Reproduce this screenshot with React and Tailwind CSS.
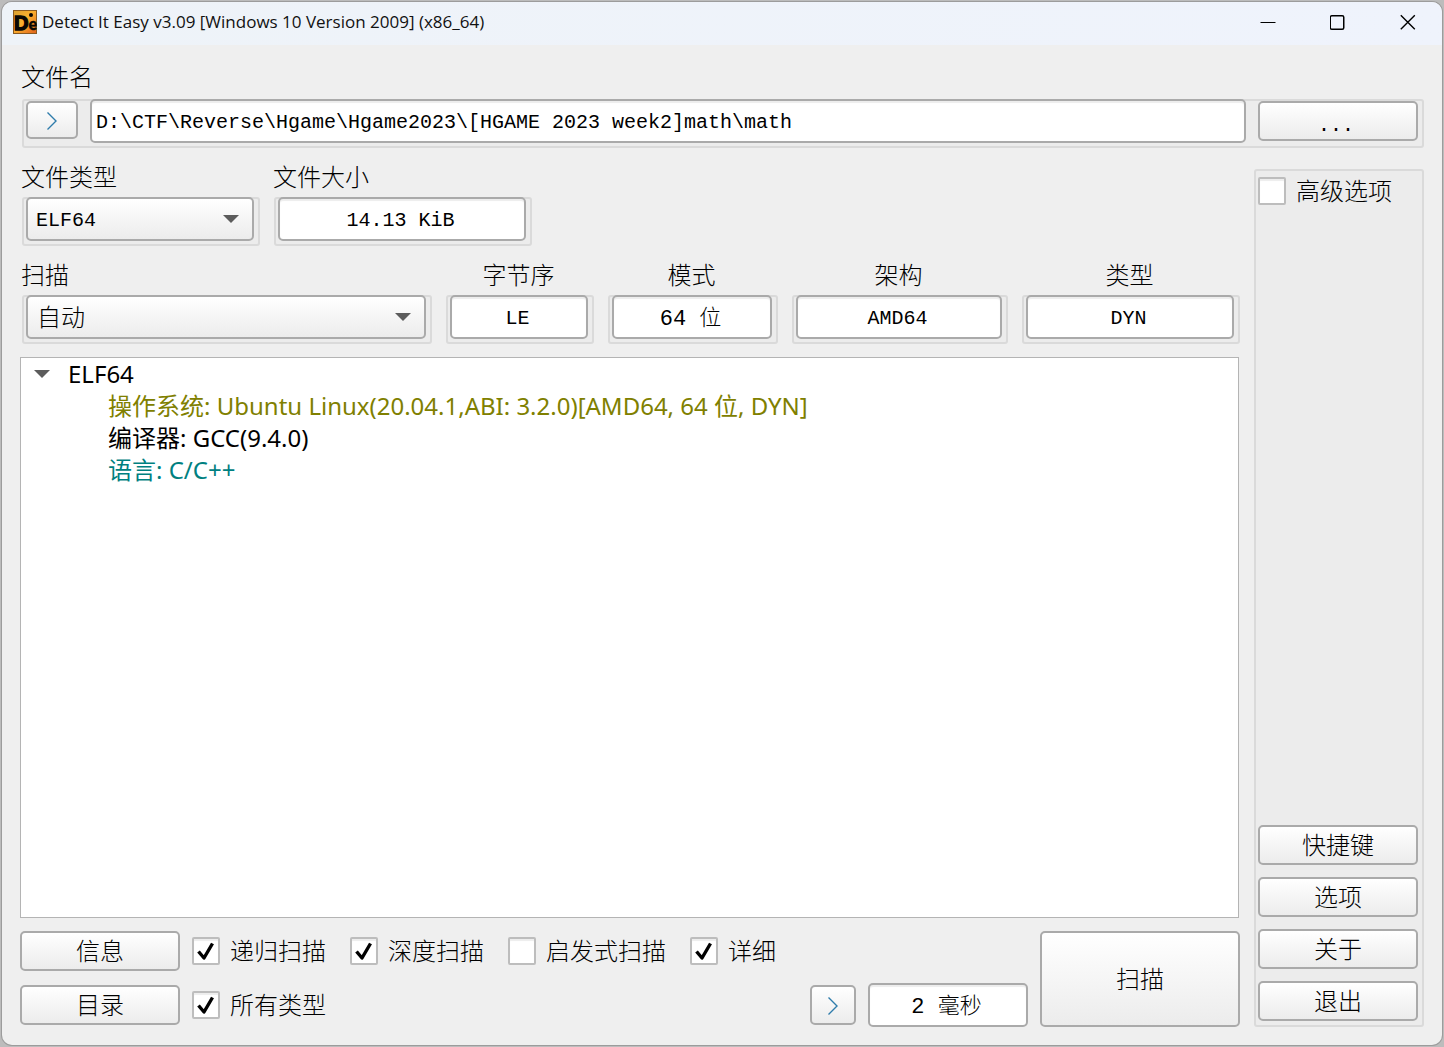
import { useState } from "react";
import clsx from "clsx";

const mono = "font-['Liberation_Mono','Noto_Sans_CJK_SC',monospace]";
const cjk = "font-['Noto_Sans_CJK_SC',sans-serif] font-light";

const SCAN_ENGINES = ["自动", "Detect It Easy", "Nauz File Detector"];

const RESULTS = [
  {
    id: "os",
    text: "操作系统: Ubuntu Linux(20.04.1,ABI: 3.2.0)[AMD64, 64 位, DYN]",
    color: "text-[#808000]",
  },
  { id: "compiler", text: "编译器: GCC(9.4.0)", color: "text-black" },
  { id: "language", text: "语言: C/C++", color: "text-[#008080]" },
];

const AppIcon = () => (
  <svg width="24" height="24" viewBox="0 0 24 24" aria-hidden="true">
    <defs>
      <linearGradient id="logo" x1="0" y1="0" x2="1" y2="1">
        <stop offset="0" stopColor="#d9a030" />
        <stop offset="0.45" stopColor="#fbb02e" />
        <stop offset="1" stopColor="#e2641a" />
      </linearGradient>
    </defs>
    <rect width="24" height="24" fill="#8a5a20" />
    <rect x="1" y="1" width="22" height="22" fill="url(#logo)" />
    <text
      x="1"
      y="19.5"
      fontFamily="'Liberation Sans Narrow', 'Liberation Sans', sans-serif"
      fontWeight="700"
      fontSize="20"
      stroke="#0a0703"
      strokeWidth="1.4"
      fill="#0a0703"
    >
      D<tspan fontFamily="Lato, sans-serif" fontWeight="900" fontSize="16" strokeWidth="0.4">e</tspan>
    </text>
    <circle cx="18" cy="5" r="2" fill="#0a0703" />
  </svg>
);

const TitleBar = () => (
  <header className="flex h-[43px] shrink-0 items-center justify-between bg-linear-to-r from-[#eef3f8] to-[#eff3fc] pr-[26px] pb-1 pl-[11px]">
    <div className="flex items-center gap-[5px]">
      <AppIcon />
      <h1 className="font-['Open_Sans',sans-serif] text-[17px] leading-6 text-[#111]">
        Detect It Easy v3.09 [Windows 10 Version 2009] (x86_64)
      </h1>
    </div>
    <div className="flex items-center gap-[54px]">
      <button type="button" aria-label="Minimize">
        <svg width="16" height="16" viewBox="0 0 16 16" className="block">
          <path d="M0.5 8.5H15.5" stroke="#000" />
        </svg>
      </button>
      <button type="button" aria-label="Maximize">
        <svg width="16" height="16" viewBox="0 0 16 16" className="block">
          <rect
            x="0.25"
            y="1.75"
            width="13.5"
            height="13.5"
            rx="1.5"
            fill="none"
            stroke="#000"
            strokeWidth="1.5"
          />
        </svg>
      </button>
      <button type="button" aria-label="Close">
        <svg width="16" height="16" viewBox="0 0 16 16" className="block">
          <path
            d="M0.8 1.3L14.8 15.3M14.8 1.3L0.8 15.3"
            stroke="#000"
            strokeWidth="1.4"
          />
        </svg>
      </button>
    </div>
  </header>
);

const Button = ({ className, children, ...props }) => (
  <button
    type="button"
    className={clsx(
      "flex items-center justify-center rounded-[5px] border-2 border-[#aaa] bg-linear-to-b from-white to-[#ececec] pb-[2px] text-[24px] leading-8 text-black",
      className
    )}
    {...props}
  >
    {children}
  </button>
);

const Chevron = () => (
  <svg width="12" height="20" viewBox="0 0 12 20" fill="none">
    <path d="M1.5 1.5L10 10L1.5 18.5" stroke="#2e7cab" strokeWidth="1.4" />
  </svg>
);

const Triangle = ({ className }) => (
  <svg
    width="16"
    height="8"
    viewBox="0 0 16 8"
    className={className}
    aria-hidden="true"
  >
    <path d="M0 0H16L8 8Z" fill="#5c5c5c" />
  </svg>
);

// sunken group box that surrounds a single control
const Frame = ({ className, children }) => (
  <div
    className={clsx(
      "rounded-[3px] bg-[#ececec] pr-[6px] pb-[5px] pl-1 inset-ring-2 inset-ring-[#dadada]",
      className
    )}
  >
    {children}
  </div>
);

const Label = ({ className, ...props }) => (
  <label
    className={clsx(cjk, "block h-[34px] text-[24px] leading-[26px]", className)}
    {...props}
  />
);

const TextField = ({ className, ...props }) => (
  <input
    type="text"
    className={clsx(
      mono,
      "h-11 min-w-0 rounded-[5px] border-2 border-[#aaa] bg-white pr-[3px] text-black outline-none inset-shadow-[0_2px_1px_#ededed]",
      className
    )}
    {...props}
  />
);

const Select = ({ className, options, ...props }) => (
  <div className="grid items-center">
    <select
      className={clsx(
        "col-start-1 row-start-1 h-11 w-full appearance-none rounded-[5px] border-2 border-[#aaa] bg-linear-to-b from-white to-[#ececec] text-black outline-none",
        className
      )}
      {...props}
    >
      {options.map((option) => (
        <option key={option}>{option}</option>
      ))}
    </select>
    <Triangle className="pointer-events-none col-start-1 row-start-1 mr-[15px] justify-self-end" />
  </div>
);

const Checkbox = ({ label, defaultChecked = false }) => {
  const [checked, setChecked] = useState(defaultChecked);

  return (
    <label className="flex items-center gap-[10px]">
      <span className="grid size-7 place-items-center">
        <input
          type="checkbox"
          checked={checked}
          onChange={(e) => setChecked(e.target.checked)}
          className="col-start-1 row-start-1 size-7 appearance-none rounded-[2px] border-2 border-[#bdbdbd] bg-white inset-shadow-[0_2px_1px_#ededed]"
        />
        {checked ? (
          <svg
            width="20"
            height="20"
            viewBox="0 0 20 20"
            fill="none"
            className="pointer-events-none col-start-1 row-start-1"
          >
            <path
              d="M2.5 10.5L8 17L16.5 2.5"
              stroke="#000"
              strokeWidth="3.4"
              strokeLinejoin="round"
            />
          </svg>
        ) : null}
      </span>
      <span className={clsx(cjk, "pb-[2px] text-[24px] leading-[26px]")}>
        {label}
      </span>
    </label>
  );
};

const ReadOnlyField = ({ id, label, value, size = "pt-[3px] text-[20px]" }) => (
  <div>
    <Label htmlFor={id} className="pr-[3px] text-center">
      {label}
    </Label>
    <Frame>
      <TextField
        id={id}
        defaultValue={value}
        readOnly
        className={clsx("w-full text-center", size)}
      />
    </Frame>
  </div>
);

const FileRow = () => (
  <section>
    <Label htmlFor="file-name" className="-ml-px mb-[2px]">
      文件名
    </Label>
    <Frame className="flex items-start gap-3">
      <Button
        className="mt-[2px] h-[38px] w-[52px] pt-1"
        aria-label="File actions"
      >
        <Chevron />
      </Button>
      <TextField
        id="file-name"
        defaultValue="D:\CTF\Reverse\Hgame\Hgame2023\[HGAME 2023 week2]math\math"
        className="flex-1 pt-[3px] pl-1 text-[20px]"
      />
      <Button
        className={clsx(mono, "mt-[2px] h-10 w-40")}
        aria-label="Open file"
      >
        <span className="pt-3 pr-1 text-[20px]">...</span>
      </Button>
    </Frame>
  </section>
);

const TypeRow = () => (
  <section className="flex gap-[14px]">
    <div className="w-[238px]">
      <Label htmlFor="file-type" className="-ml-px">
        文件类型
      </Label>
      <Frame>
        <Select
          id="file-type"
          options={["ELF64", "Binary"]}
          className={clsx(mono, "pt-[3px] pl-2 text-[20px]")}
        />
      </Frame>
    </div>
    <div className="w-[258px]">
      <Label htmlFor="file-size" className="-ml-px">
        文件大小
      </Label>
      <Frame>
        <TextField
          id="file-size"
          defaultValue="14.13 KiB"
          readOnly
          className="w-full pt-[3px] text-center text-[20px]"
        />
      </Frame>
    </div>
  </section>
);

const ScanRow = () => (
  <section className="grid grid-cols-[410fr_148fr_170fr_216fr_218fr] gap-[14px]">
    <div>
      <Label htmlFor="engine" className="-ml-px">
        扫描
      </Label>
      <Frame>
        <Select
          id="engine"
          options={SCAN_ENGINES}
          className={clsx(cjk, "pb-[2px] pl-[9px] text-[24px]")}
        />
      </Frame>
    </div>
    <ReadOnlyField id="endian" label="字节序" value="LE" />
    <ReadOnlyField
      id="mode"
      label="模式"
      value="64 位"
      size="pb-[3px] text-[22px] font-light"
    />
    <ReadOnlyField id="arch" label="架构" value="AMD64" />
    <ReadOnlyField id="kind" label="类型" value="DYN" />
  </section>
);

const ResultTree = () => {
  const [isOpen, setOpen] = useState(true);

  return (
    <div className="mt-[13px] mr-px -ml-[2px] flex-1 border border-[#b4b4b4] bg-white font-['Noto_Sans','Noto_Sans_CJK_SC',sans-serif] text-[24px] leading-8">
      <button
        type="button"
        className="flex items-center gap-[18px] pl-[13px]"
        onClick={() => setOpen(!isOpen)}
      >
        <Triangle className={isOpen ? "" : "-rotate-90"} />
        ELF64
      </button>
      {isOpen ? (
        <ul className="pl-[87px]">
          {RESULTS.map((row) => (
            <li key={row.id} className={row.color}>
              {row.text}
            </li>
          ))}
        </ul>
      ) : null}
    </div>
  );
};

const BottomBar = () => (
  <footer className="mt-[13px] -ml-[2px] flex gap-3">
    <div className="flex flex-1 flex-col gap-[14px]">
      <div className="flex items-center">
        <Button className={clsx(cjk, "mr-3 h-10 w-40")}>信息</Button>
        <div className="flex gap-6">
          <Checkbox label="递归扫描" defaultChecked />
          <Checkbox label="深度扫描" defaultChecked />
          <Checkbox label="启发式扫描" />
          <Checkbox label="详细" defaultChecked />
        </div>
      </div>
      <div className="flex h-10 items-center gap-3">
        <Button className={clsx(cjk, "h-10 w-40")}>目录</Button>
        <Checkbox label="所有类型" defaultChecked />
        <Button
          className="ml-auto h-10 w-[46px] pt-1"
          aria-label="Elapsed details"
        >
          <Chevron />
        </Button>
        <TextField
          aria-label="Elapsed time"
          defaultValue="2 毫秒"
          readOnly
          className="w-40 pb-[3px] text-center text-[22px] font-light"
        />
      </div>
    </div>
    <Button className={clsx(cjk, "h-24 w-[200px]")}>扫描</Button>
  </footer>
);

const Sidebar = () => (
  <aside className="mt-[21px] flex flex-col justify-between rounded-[3px] bg-[#ececec] pt-2 pr-[6px] pb-[6px] pl-1 inset-ring-2 inset-ring-[#dadada]">
    <Checkbox label="高级选项" />
    <div className={clsx(cjk, "flex flex-col gap-3")}>
      {["快捷键", "选项", "关于", "退出"].map((name) => (
        <Button key={name} className="h-10 w-40">
          {name}
        </Button>
      ))}
    </div>
  </aside>
);

const App = () => {
  return (
    <div className="flex min-h-screen bg-[#bcbcbc] p-[2px] text-black">
      <div className="flex flex-1 flex-col overflow-hidden rounded-[10px] bg-[#efefef] ring-1 ring-[#9c9c9c]">
        <TitleBar />
        <main className="flex flex-1 flex-col pt-[18px] pr-[18px] pb-[18px] pl-5">
          <FileRow />
          <div className="flex flex-1 gap-[14px]">
            <div className="flex flex-1 flex-col">
              <div className="flex flex-col gap-[15px] pt-[15px]">
                <TypeRow />
                <ScanRow />
              </div>
              <ResultTree />
              <BottomBar />
            </div>
            <Sidebar />
          </div>
        </main>
      </div>
    </div>
  );
};

export default App;
